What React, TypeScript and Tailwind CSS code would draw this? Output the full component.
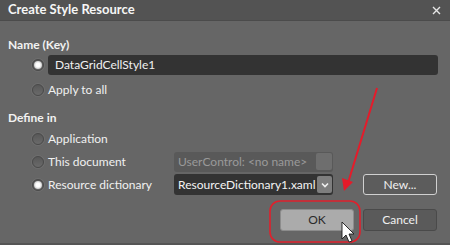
import React from 'react'

function Radio({ checked }: { checked?: boolean }) {
  return (
    <span className="w-[12px] h-[12px] rounded-full border border-[#4a4a4a] bg-[linear-gradient(#585858,#6a6a6a)] flex items-center justify-center shrink-0 shadow-[0_0_0_1px_rgba(120,120,120,0.5)]">
      {checked && <span className="w-[8px] h-[8px] rounded-full bg-[radial-gradient(circle,#ffffff_35%,#bdbdbd_80%)]"></span>}
    </span>
  )
}

function Option({ label, checked, children }: { label: string; checked?: boolean; children?: React.ReactNode }) {
  return (
    <div className="flex items-center h-[21px] pl-[32px]">
      <Radio checked={checked} />
      <span className="ml-[4px] w-[126px] text-[#f0f0f0]">{label}</span>
      {children}
    </div>
  )
}

function Chevron() {
  return (
    <svg width="8" height="6" viewBox="0 0 8 6">
      <path d="M1 1.5 L4 4.5 L7 1.5" stroke="#f0f0f0" strokeWidth="1.6" fill="none" />
    </svg>
  )
}

export default function App() {
  return (
    <div className="relative w-[450px] h-[245px] bg-[#666666] overflow-hidden text-[12px] font-['Lato',sans-serif]">
      <div className="h-[21px] bg-[#535353] border-b border-[#4b4b4b] flex items-center justify-between pl-[8px] pr-[9px]">
        <span className="font-bold text-[13px] text-[#f6f6f6]">Create Style Resource</span>
        <svg width="9" height="9" viewBox="0 0 9 9">
          <path d="M1 1 L8 8 M8 1 L1 8" stroke="#e6e6e6" strokeWidth="1.4" />
        </svg>
      </div>

      <div className="pt-[16px]">
        <div className="pl-[8px] font-bold text-[#f2f2f2] h-[16px] leading-[16px]">Name (Key)</div>
        <div className="flex items-center h-[20px] mt-[2px] pl-[32px]">
          <Radio checked />
          <div className="ml-[4px] w-[390px] h-[20px] rounded-[3px] bg-[#333333] flex items-center pl-[7px] text-[#f0f0f0]">
            DataGridCellStyle1
          </div>
        </div>
        <div className="mt-[4px]">
          <Option label="Apply to all" />
        </div>

        <div className="mt-[10px] pl-[8px] font-bold text-[#f2f2f2] h-[16px] leading-[16px]">Define in</div>
        <div className="mt-[2px] flex flex-col gap-[2px]">
          <Option label="Application" />
          <Option label="This document">
            <div className="w-[159px] h-[20px] rounded-[3px] bg-[#595959] flex items-center justify-between pl-[4px] pr-[1px] text-[#9a9a9a]">
              <span>UserControl: &lt;no name&gt;</span>
              <span className="w-[16px] h-[17px] rounded-[2px] bg-[#6e6e6e]"></span>
            </div>
          </Option>
          <Option label="Resource dictionary" checked>
            <div className="w-[159px] h-[21px] rounded-[3px] bg-[#333333] flex items-center justify-between pl-[4px] pr-[1px] text-[#f4f4f4]">
              <span>ResourceDictionary1.xaml</span>
              <span className="w-[15px] h-[17px] rounded-[2px] bg-[#7e7e7e] flex items-center justify-center">
                <Chevron />
              </span>
            </div>
            <div className="ml-[30px] w-[74px] h-[21px] rounded-[3px] border border-[#d0d0d0] bg-[#5c5c5c] flex items-center justify-center text-[#f0f0f0]">
              New...
            </div>
          </Option>
        </div>

        <div className="mt-[14px] flex justify-end gap-[9px] pr-[13px]">
          <div className="w-[74px] h-[22px] rounded-[3px] border border-[#8c8c8c] bg-[#ababab] flex items-center justify-center text-[#2a2a2a]">
            OK
          </div>
          <div className="w-[74px] h-[22px] rounded-[3px] border border-[#4a4a4a] bg-[#5a5a5a] flex items-center justify-center text-[#f0f0f0]">
            Cancel
          </div>
        </div>
      </div>

      <div className="absolute left-0 right-0 bottom-0 h-[2px] bg-[#555555]"></div>

      <svg className="absolute left-0 top-0" width="450" height="245" viewBox="0 0 450 245">
        <rect x="270" y="201" width="90" height="41" rx="10" fill="none" stroke="#e0202c" strokeWidth="1.6" />
        <path d="M377 88 L348 183" stroke="#e51b2a" strokeWidth="2" fill="none" />
        <path d="M344 191 L342 178 L353 182 Z" fill="#e51b2a" />
        <path d="M342 222 L342 239 L346 235 L349 242 L352 241 L349 234 L354 234 Z" fill="#ffffff" stroke="#1a1a1a" strokeWidth="0.9" />
      </svg>
    </div>
  )
}
